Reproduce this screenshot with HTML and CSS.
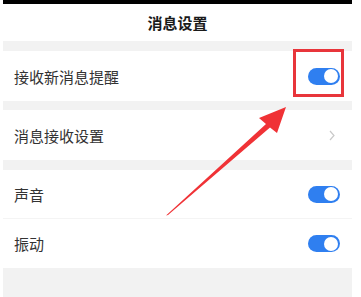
FILE: index.html
```html
<!DOCTYPE html>
<html lang="zh-CN">
<head>
    <meta charset="UTF-8">
    <meta name="viewport" content="width=device-width, initial-scale=1.0">
    <title>消息设置</title>
    <link rel="stylesheet" href="styles.css">
</head>
<body>
    <div class="app">
        <div class="status-bar"></div>
        <div class="header">消息设置</div>

        <div class="gap"></div>
        <div class="row row-first">
            <span class="label">接收新消息提醒</span>
            <span class="switch on"></span>
        </div>

        <div class="gap gap-small"></div>
        <div class="row">
            <span class="label">消息接收设置</span>
            <svg class="chevron" width="6" height="11" viewBox="0 0 6 11">
                <path d="M1 1 L5 5.5 L1 10" fill="none" stroke="#c9c9c9" stroke-width="1.2"/>
            </svg>
        </div>

        <div class="gap"></div>
        <div class="row row-sound">
            <span class="label">声音</span>
            <span class="switch on"></span>
        </div>
        <div class="divider"></div>
        <div class="row row-sound">
            <span class="label">振动</span>
            <span class="switch on"></span>
        </div>

        <div class="footer"></div>

        <!-- annotation overlay -->
        <div class="highlight"></div>
        <svg class="arrow" width="349" height="297" viewBox="0 0 349 297">
            <path d="M166 215.5 L168 215 L270 127.5 L277 133 L286 107 L259 118 L266 124 Z" fill="#f03236"/>
        </svg>
    </div>
</body>
</html>
```

FILE: styles.css
```css
body {
    margin: 0;
    background: white;
    font-family: "Noto Sans CJK SC", "Noto Sans", sans-serif;
}

.app {
    position: relative;
    width: 349px;
    height: 297px;
    margin-left: 3px;
    background: #f2f2f2;
    overflow: hidden;
}

.status-bar {
    height: 4px;
    background: #000;
}

.header {
    height: 37px;
    background: white;
    display: flex;
    align-items: center;
    justify-content: center;
    font-size: 15px;
    font-weight: bold;
    color: #1a1a1a;
}

.gap {
    height: 10px;
}

.gap-small {
    height: 9px;
}

.row {
    height: 50px;
    background: white;
    display: flex;
    align-items: center;
    justify-content: space-between;
    padding: 0 12px 0 11px;
}

.row-sound {
    height: 48px;
}

.row-sound + .divider + .row-sound {
    height: 49px;
}

.label {
    font-size: 15px;
    color: #333;
}

.divider {
    height: 1px;
    background: #f4f4f4;
}

.chevron {
    margin-right: 5px;
}

.switch {
    position: relative;
    width: 32px;
    height: 17px;
    border-radius: 9px;
    background: #2f7ff0;
}

.switch::after {
    content: "";
    position: absolute;
    top: 1.5px;
    right: 2px;
    width: 14px;
    height: 14px;
    border-radius: 50%;
    background: white;
}

.footer {
    height: 29px;
}

.highlight {
    position: absolute;
    left: 290px;
    top: 49px;
    width: 45px;
    height: 42px;
    border: 3px solid #e8353b;
}

.arrow {
    position: absolute;
    left: -3px;
    top: 0;
    pointer-events: none;
}
```
